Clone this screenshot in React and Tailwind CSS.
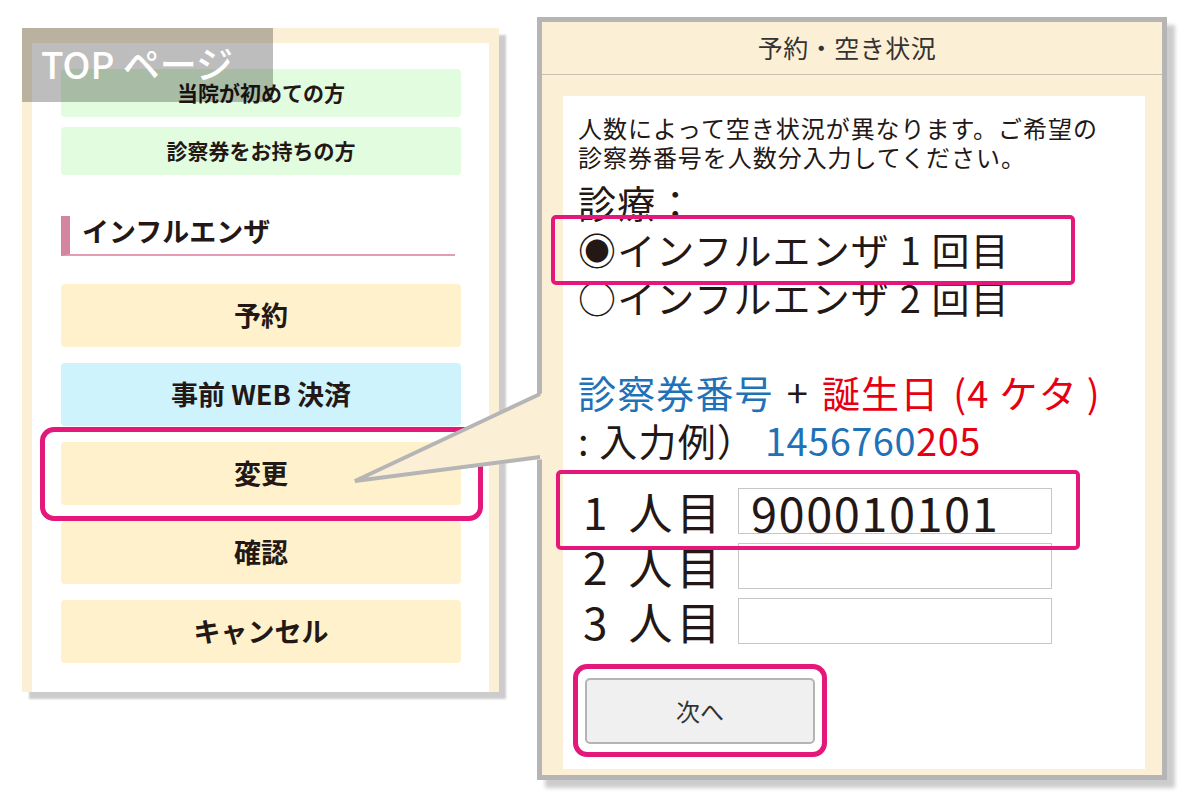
import React from 'react';

const GREEN_LINKS = ['当院が初めての方', '診察券をお持ちの方'];

const MENU = [
  { label: '予約', bg: 'bg-[#fef1cb]' },
  { label: '事前 WEB 決済', bg: 'bg-[#cff3fc]' },
  { label: '変更', bg: 'bg-[#fef1cb]' },
  { label: '確認', bg: 'bg-[#fef1cb]' },
  { label: 'キャンセル', bg: 'bg-[#fef1cb]' },
];

const ROWS = [
  { n: '1', value: '900010101' },
  { n: '2', value: '' },
  { n: '3', value: '' },
];

function TopPage() {
  return (
    <div className="relative mt-[28px] h-[664px] w-[477px] shrink-0 bg-[#fbf0d6] px-[10px] pt-[15px] shadow-[7px_7px_2px_rgba(0,0,0,0.2)]">
      <div className="h-full bg-white pl-[29px] pr-[28px] pt-[26px]">
        {/* first visit / card holders */}
        <div className="flex flex-col gap-[10px]">
          {GREEN_LINKS.map((t) => (
            <div
              key={t}
              className="flex h-[48px] items-center justify-center rounded-[4px] bg-[#e2fcdf] text-[21px] font-bold"
            >
              {t}
            </div>
          ))}
        </div>

        {/* section heading */}
        <div className="mt-[41px] flex h-[40px] w-[394px] items-center border-b-2 border-l-[9px] border-b-[#e39cb3] border-l-[#d6859e] pb-[8px] pl-[12px] text-[27px] font-bold">
          インフルエンザ
        </div>

        <div className="mt-[28px] flex flex-col gap-[16px]">
          {MENU.map((m) => (
            <div
              key={m.label}
              className={`flex h-[63px] items-center justify-center rounded-[4px] ${m.bg} text-[27px] font-bold`}
            >
              {m.label}
            </div>
          ))}
        </div>
      </div>

      {/* page label */}
      <div className="absolute left-0 top-0 h-[74px] w-[251px] bg-black/[0.26] pl-[19px] pt-[17px] text-[37px] font-medium leading-none text-white">
        TOP ページ
      </div>

      {/* highlight */}
      <div className="absolute left-[18px] top-[399px] h-[94px] w-[443px] rounded-[14px] border-[5px] border-[#e4187b]" />
    </div>
  );
}

function Availability() {
  return (
    <div className="ml-[38px] mt-[17px] flex h-[763px] w-[630px] shrink-0 flex-col border-[5px] border-[#b5b5b5] bg-[#fbf0d6] shadow-[8px_8px_4px_rgba(0,0,0,0.2)]">
      <div className="flex h-[53px] shrink-0 items-center justify-center border-b border-[#c9c1b1] pr-[10px] text-[25px] tracking-[0.02em] text-[#333]">
        予約・空き状況
      </div>

      <div className="flex-1 pb-[6px] pl-[21px] pr-[17px] pt-[21px]">
        <div className="relative h-full bg-white pl-[15px] pt-[17px]">
          <p className="text-[24px] leading-[29px] tracking-[0.04em]">
            人数によって空き状況が異なります。ご希望の
            <br />
            診察券番号を人数分入力してください。
          </p>

          <div className="mt-[8px] text-[38px] leading-[46px] tracking-[0.03em]">診療：</div>
          <div className="text-[38px] leading-[48px] tracking-[0.03em]">◉インフルエンザ 1 回目</div>
          <div className="text-[38px] leading-[48px] tracking-[0.03em]">○インフルエンザ 2 回目</div>

          <div className="mt-[47px] flex items-baseline text-[38px] leading-[48px] tracking-[0.03em]">
            <span className="text-[#1f71b8]">診察券番号</span>
            <span className="mx-[13px]">+</span>
            <span className="text-[#e60012]">誕生日</span>
            <span className="ml-[14px] text-[#e60012]">(4</span>
            <span className="ml-[10px] text-[#e60012]">ケタ</span>
            <span className="ml-[9px] text-[#e60012]">)</span>
          </div>
          <div className="text-[38px] leading-[48px]">
            <span className="tracking-[0.03em]">: 入力例）</span>
            <span className="ml-[9px] tracking-[0.5px] text-[#1f71b8]">1456760</span>
            <span className="tracking-[0.5px] text-[#e60012]">205</span>
          </div>

          <div className="mt-[24px] flex flex-col gap-[9px]">
            {ROWS.map((r) => (
              <div key={r.n} className="flex items-center">
                <div className="w-[160px] pl-[5px] text-[44px] leading-none">
                  <span>{r.n}</span>
                  <span className="ml-[21px] tracking-[4px]">人目</span>
                </div>
                <input
                  readOnly
                  value={r.value}
                  className="h-[46px] w-[314px] border border-[#c6c6c6] bg-white pl-[12px] text-[47px] leading-none tracking-[1.5px] text-[#231815] outline-none"
                />
              </div>
            ))}
          </div>

          <button className="ml-[7px] mt-[34px] flex h-[66px] w-[230px] items-center justify-center rounded-[5px] border-2 border-[#b4b4b4] bg-[#f0f0f0] text-[24px] text-[#333]">
            次へ
          </button>

          {/* highlights */}
          <div className="absolute left-[-12px] top-[119px] h-[70px] w-[524px] rounded-[5px] border-4 border-[#e4187b]" />
          <div className="absolute left-[-7px] top-[374px] h-[80px] w-[524px] rounded-[5px] border-4 border-[#e4187b]" />
          <div className="absolute left-[10px] top-[568px] h-[93px] w-[254px] rounded-[14px] border-[5px] border-[#e4187b]" />
        </div>
      </div>
    </div>
  );
}

function Callout() {
  return (
    <svg className="pointer-events-none absolute left-0 top-0" width="1200" height="800" viewBox="0 0 1200 800">
      <polygon points="355,481 545,392 545,459" fill="#fbf0d6" />
      <polyline
        points="540,394 355,481 540,457"
        fill="none"
        stroke="#b5b5b5"
        strokeWidth="4"
        strokeLinejoin="miter"
      />
    </svg>
  );
}

export default function App() {
  return (
    <div className="relative h-[800px] w-[1200px] overflow-hidden bg-white font-['Noto_Sans_CJK_JP','Noto_Sans',sans-serif] text-[#231815]">
      <div className="flex items-start pl-[22px]">
        <TopPage />
        <Availability />
      </div>
      <Callout />
    </div>
  );
}
